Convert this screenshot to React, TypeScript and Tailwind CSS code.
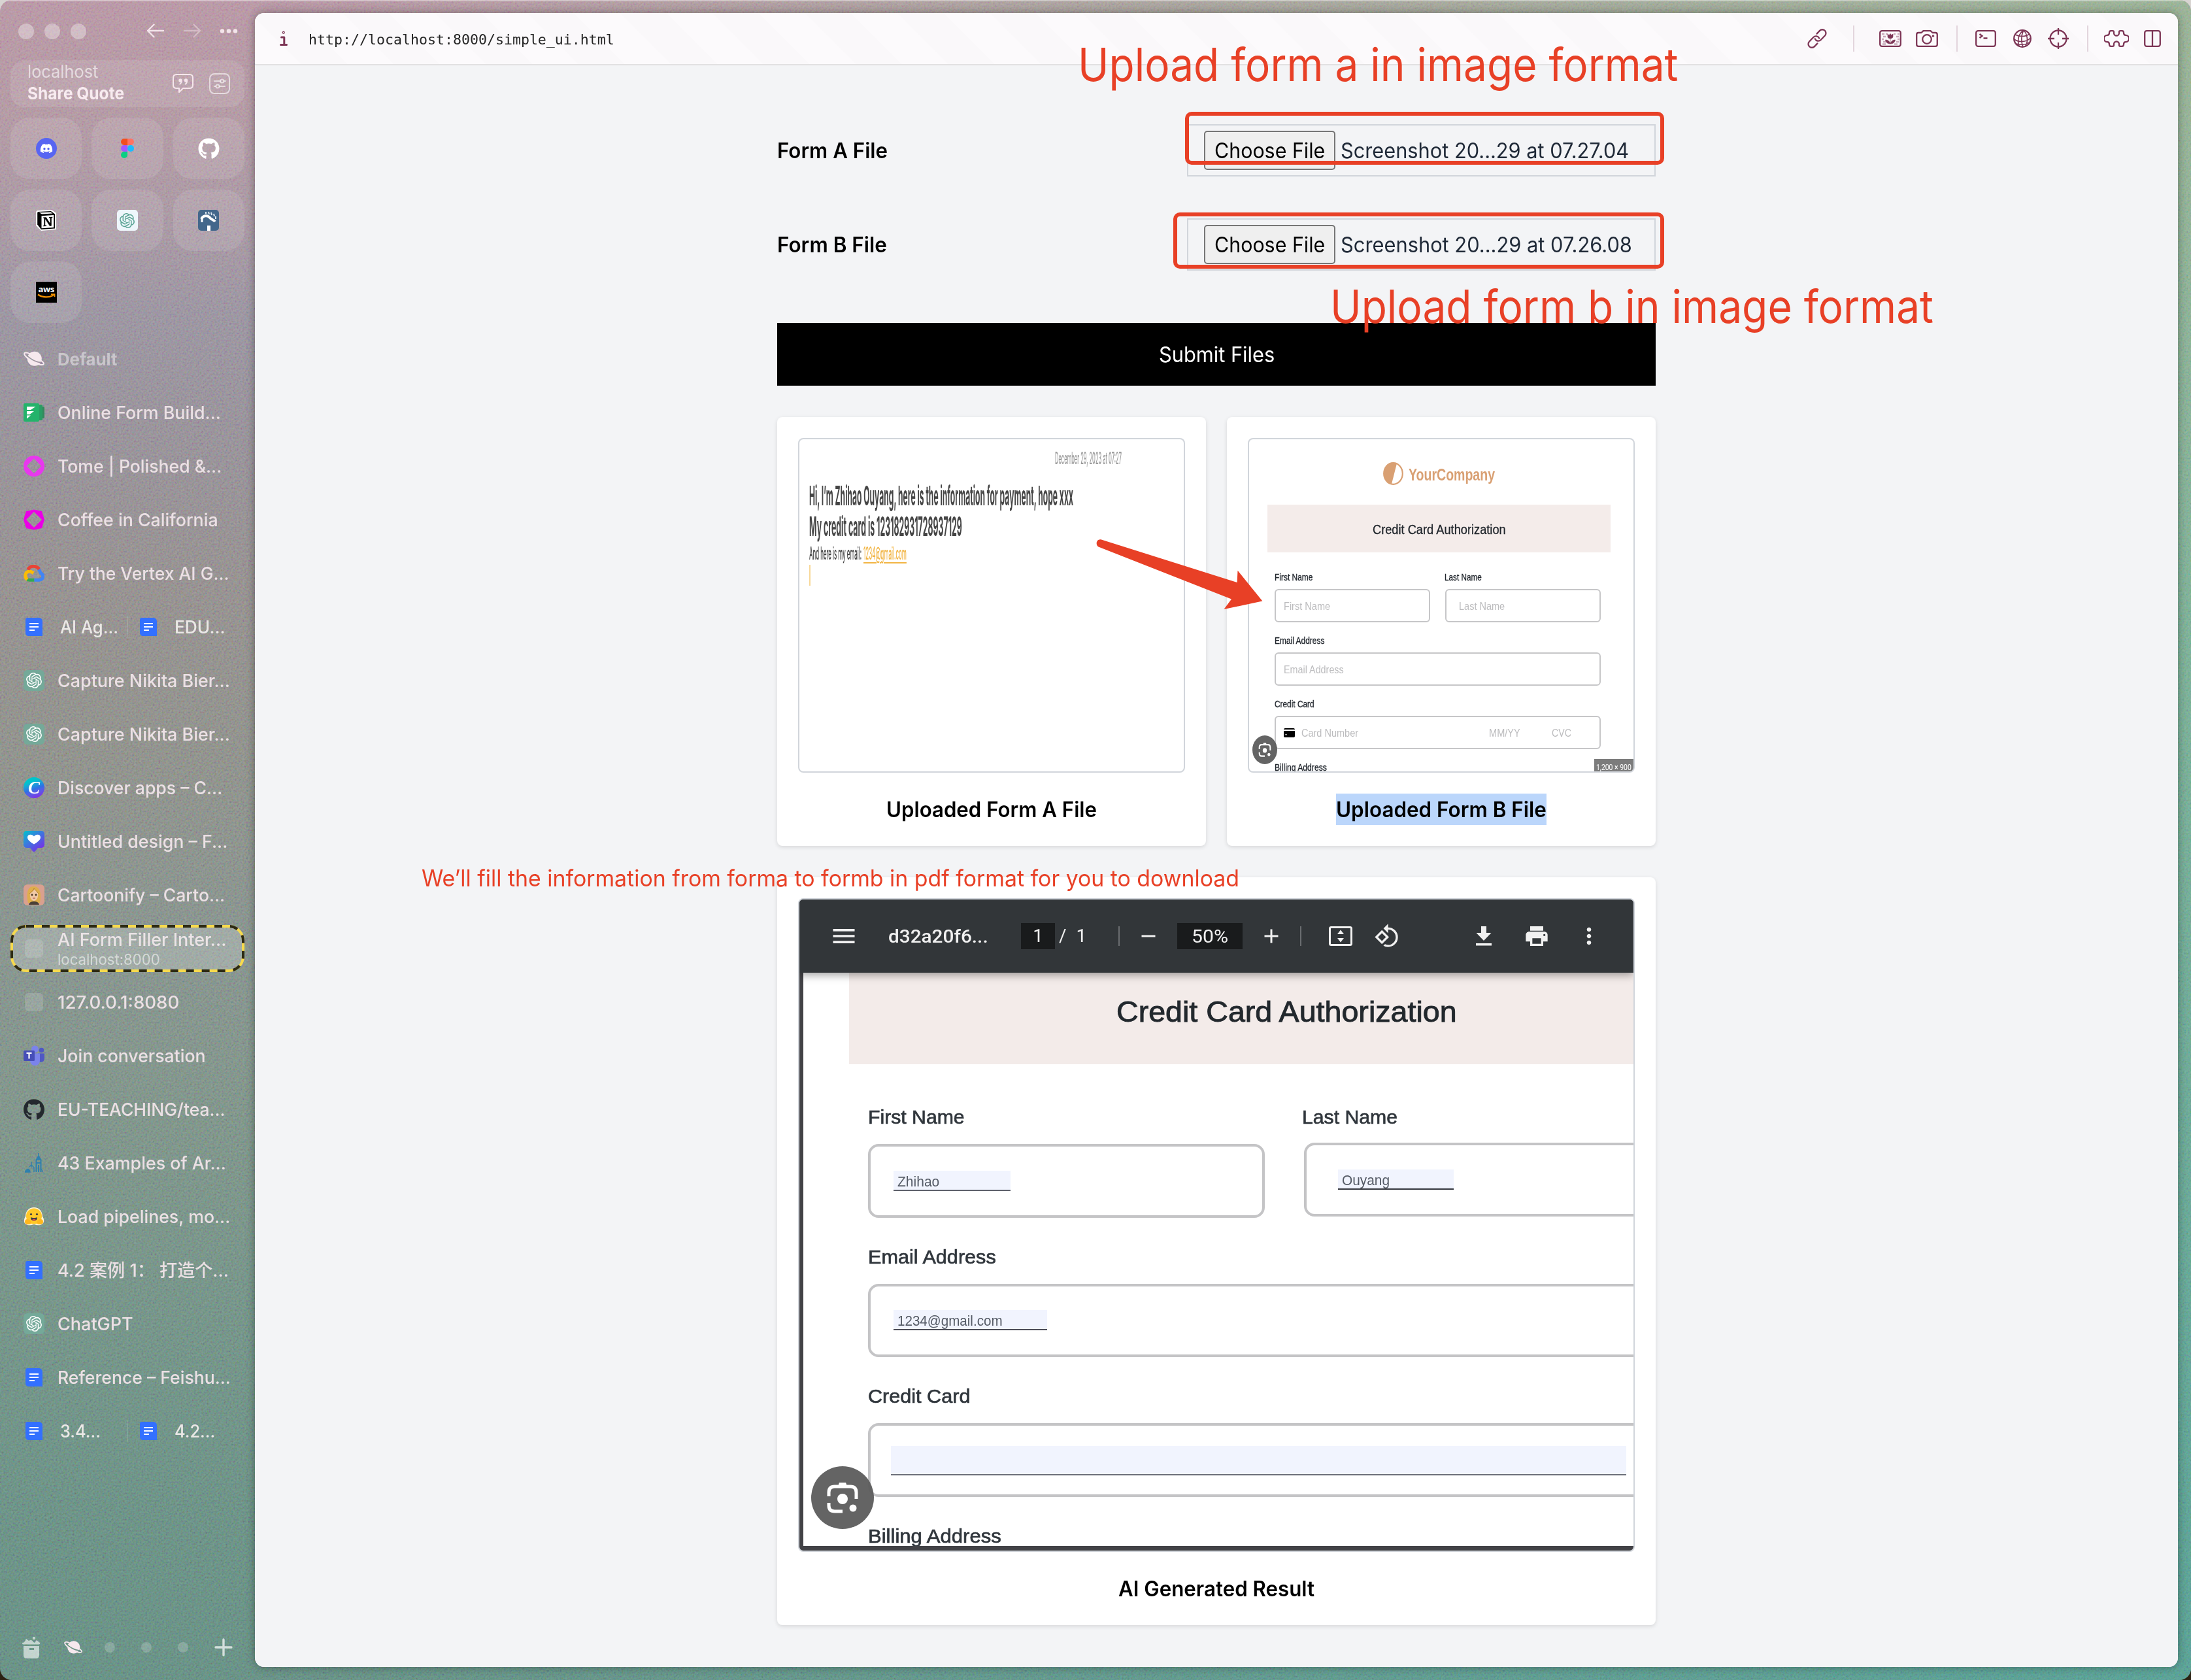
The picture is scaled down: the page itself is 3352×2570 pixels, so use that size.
import { useLayoutEffect, useRef } from "react";
import type { ReactNode } from "react";
import { FaDiscord, FaGithub } from "react-icons/fa";
import { SiOpenai } from "react-icons/si";
import { MdMenu, MdRemove, MdAdd, MdPrint, MdMoreVert, MdRotate90DegreesCcw } from "react-icons/md";

/* Single line of text stretched or squeezed to the width of its box. */
function Fit({ className, children }: { className: string; children: ReactNode }) {
  const box = useRef<HTMLSpanElement>(null);
  const line = useRef<HTMLSpanElement>(null);
  useLayoutEffect(() => {
    if (!box.current || !line.current) return;
    const natural = line.current.offsetWidth;
    if (natural > 0) {
      line.current.style.transform = `translateY(1px) scaleX(${box.current.clientWidth / natural})`;
    }
  });
  return (
    <span ref={box} className={`block shrink-0 whitespace-nowrap ${className}`}>
      <span ref={line} className="inline-block origin-left">
        {children}
      </span>
    </span>
  );
}

/* ---------- sidebar icons ---------- */

function Planet({ className, id }: { className: string; id: string }) {
  return (
    <svg viewBox="0 0 32 24" className={className} fill="none">
      <mask id={id}>
        <rect width="32" height="24" fill="white" />
        <path d="M3 5 C8 13 22 21 30 19" stroke="black" strokeWidth="1.8" transform="translate(-1 -2)" />
      </mask>
      <path
        d="M9 4 C5 2 1.5 2.2 1.2 4 C0.8 7 9 14 17 18 C24 21.3 30 22 30.8 19.8 C31.3 18 29.5 16.5 27 14.8"
        stroke="#f6e9ee"
        strokeWidth="2"
        strokeLinecap="round"
      />
      <ellipse cx="16.8" cy="11.8" rx="11" ry="11" fill="#f6e9ee" mask={`url(#${id})`} />
    </svg>
  );
}

function Figma() {
  return (
    <svg viewBox="0 0 20 30" className="h-[30px] w-5">
      <path d="M5 0H10V10H5A5 5 0 0 1 5 0Z" fill="#f24e1e" />
      <path d="M10 0H15A5 5 0 0 1 15 10H10Z" fill="#ff7262" />
      <path d="M5 10H10V20H5A5 5 0 0 1 5 10Z" fill="#a259ff" />
      <circle cx="15" cy="15" r="5" fill="#1abcfe" />
      <path d="M5 20H10V25A5 5 0 1 1 5 20Z" fill="#0acf83" />
    </svg>
  );
}

function Notion() {
  return (
    <svg viewBox="0 0 32 32" className="size-8">
      <path d="M2 1 L24 0 L31 5 V30 L8 32 L0 24 V3 Z" fill="white" />
      <path d="M3 3 L23 2 L29 6.5 V28.5 L8 30 L2.2 22.5 V4.5 Z" fill="black" />
      <path d="M5 4.2 L22.5 3.4 L25.5 5.5 L9 6.5 Z" fill="white" />
      <path d="M8.5 9.2 L27.2 8 V27 L8.5 28.2 Z" fill="white" />
      <path d="M11.2 11.6 L15.6 11.3 L21.7 20.8 V12.7 L20 12.3 V11.1 L25.3 10.8 V12 L23.8 12.5 V24.6 L21.2 24.9 L14.2 14.2 V23.4 L16.2 23.9 V25 L11.2 25.3 V24.1 L12.4 23.7 V13.1 L11.2 12.8 Z" fill="black" />
    </svg>
  );
}

function BlueTile() {
  return (
    <svg viewBox="0 0 32 32" className="size-8">
      <rect width="32" height="32" rx="5" fill="#43678b" />
      <path d="M5 14 C8 8 15 8 18 12 C20 15 24 15 26 18" stroke="white" strokeWidth="4" fill="none" />
      <path d="M6 19 V13" stroke="white" strokeWidth="3" />
      <path d="M16.5 24 V32" stroke="white" strokeWidth="5" />
      <path d="M12 3v3M16 3l1 4M20 4l1 4M24 6l1 4M27 10v4" stroke="#dbe6f0" strokeWidth="2" />
    </svg>
  );
}

function Aws() {
  return (
    <div className="flex size-8 flex-col items-center bg-black">
      <span className="mt-[5px] font-['Open_Sans'] text-[13px] leading-[13px] font-bold tracking-tight text-white">aws</span>
      <svg viewBox="0 0 28 8" className="h-2 w-7" fill="none">
        <path d="M1 1.5 C8 6.5 18 6.5 25 2.5" stroke="#f29100" strokeWidth="2.2" />
        <path d="M21 1.2 H26.5 V5" stroke="#f29100" strokeWidth="1.8" />
      </svg>
    </div>
  );
}

function FormIcon() {
  return (
    <svg viewBox="0 0 32 28" className="h-7 w-8">
      <rect x="20" y="5" width="12" height="18" rx="1.5" fill="#35895c" />
      <rect x="16" y="2" width="13" height="24" rx="1.5" fill="#2a9d64" />
      <rect width="24" height="28" rx="2" fill="#24b36b" />
      <path d="M5 5 H18.5 L11 10 H5Z M5 12 H16 L9.5 17 H5Z M5 18.5 L11 18.5 L5 23.5Z" fill="white" />
    </svg>
  );
}

function Tome({ octagon }: { octagon?: boolean }) {
  return octagon ? (
    <svg viewBox="0 0 32 32" className="size-8">
      <path fillRule="evenodd" d="M16 0.5 L28 3 L32 16 L28 29 L16 31.5 L4 29 L0 16 L4 3 Z M16 4 L4 16 L16 28 L28 16 Z" fill="#ea00e6" />
    </svg>
  ) : (
    <svg viewBox="0 0 32 32" className="size-8">
      <path fillRule="evenodd" d="M16 0 C25 0 32 7 32 16 C32 25 25 32 16 32 C7 32 0 25 0 16 C0 7 7 0 16 0 Z M16 4.5 L5 16 L16 27.5 L27 16 Z" fill="#e838ee" />
    </svg>
  );
}

function GoogleCloud() {
  return (
    <svg viewBox="0 0 32 26" className="h-[26px] w-8" fill="none" strokeWidth="5">
      <path d="M7 23 C1 20.5 1.5 11 8.5 10 C12 9.7 14 12 15.2 12.8" stroke="#fbbc05" />
      <path d="M6 22.4 C7 23.3 8.5 23.2 9.5 23.2 H16.5" stroke="#34a853" />
      <path d="M16.5 23.2 H24 C31.5 22.5 31 14.5 26 12.5 C25.3 10 24 7.5 22.5 6.5" stroke="#4285f4" />
      <path d="M6.8 7.6 C9.5 1 19 0.4 24 6.6" stroke="#ea4335" />
    </svg>
  );
}

function Doc() {
  return (
    <svg viewBox="0 0 26 28" className="h-7 w-[26px] shrink-0">
      <path d="M3 0 H20 C24 0 26 2.5 26 6 V28 H5 C2 28 0 26 0 23 V3 C0 1 1 0 3 0Z" fill="#3370ff" />
      <path d="M6 9 H20 M6 14 H20 M6 19 H14" stroke="white" strokeWidth="2" />
    </svg>
  );
}

function GptTile({ light }: { light?: boolean }) {
  return light ? (
    <div className="flex size-8 items-center justify-center rounded-[5px] bg-[#eef6fb]">
      <SiOpenai className="size-[23px] text-[#5aa394]" />
    </div>
  ) : (
    <div className="flex size-8 items-center justify-center rounded-md bg-[#74a999]">
      <SiOpenai className="size-6 text-white" />
    </div>
  );
}

function Canva() {
  return (
    <div className="flex size-8 items-center justify-center rounded-full bg-linear-160 from-[#00c4cc] from-25% via-[#2f6fe4] via-55% to-[#7d2ae8] to-90%">
      <span className="font-['Liberation_Serif'] text-[27px] leading-8 font-bold text-white italic">C</span>
    </div>
  );
}

function HeartTile() {
  return (
    <svg viewBox="0 0 32 32" className="size-8">
      <defs>
        <linearGradient id="heart-bg" x1="0" y1="0" x2="0.8" y2="1">
          <stop offset="0" stopColor="#00c4cc" />
          <stop offset="0.5" stopColor="#3f73e0" />
          <stop offset="1" stopColor="#7d2ae8" />
        </linearGradient>
      </defs>
      <path d="M5 0 H27 C30 0 32 2 32 5 V21 C32 24 30 26 27 26 H22 L18 31 C17 32.3 15 32.3 14 31 L10 26 H5 C2 26 0 24 0 21 V5 C0 2 2 0 5 0Z" fill="url(#heart-bg)" />
      <path d="M16 20.5 C10 17 6 13.5 6 10 C6 5 13 4.5 16 8.5 C19 4.5 26 5 26 10 C26 13.5 22 17 16 20.5Z" fill="white" />
    </svg>
  );
}

function GirlTile() {
  return (
    <svg viewBox="0 0 32 32" className="size-8">
      <rect width="32" height="32" rx="6" fill="#d9a08f" />
      <path d="M7 28 C4 14 6 3 15 3 C25 2 28 14 25 28 Z" fill="#dfae4c" />
      <path d="M8 31 C9 27 12 26 16 26 C20 26 23 27 24 31 Z" fill="#4a4038" />
      <path d="M10 13 C13 12 16 9 17 7 C19 10 21 11 22 13 C23 20 20 25 16 25 C12 25 9 20 10 13Z" fill="#f0c9a6" />
      <path d="M9 14 C12 12 15 9 16 6 C18 9 21 11 23 14" stroke="#b98430" strokeWidth="1" fill="none" />
      <circle cx="13" cy="16" r="1.4" fill="#43301f" />
      <circle cx="19" cy="16" r="1.4" fill="#43301f" />
      <path d="M14 21 H18" stroke="#b5655a" strokeWidth="1.4" />
    </svg>
  );
}

function Blank() {
  return <div className="size-7 rounded-md bg-white/15" />;
}

function Teams() {
  return (
    <svg viewBox="0 0 32 32" className="size-8">
      <circle cx="27.5" cy="7.5" r="3.8" fill="#4f58c4" />
      <path d="M22 12.5 H32 V20 C32 27 23 27 22 24Z" fill="#4f58c4" />
      <circle cx="17.5" cy="6" r="5.5" fill="#7b83eb" />
      <path d="M10 12.5 H25 V23 C25 34 10 34 10 23Z" fill="#7b83eb" />
      <rect y="8" width="17" height="16" rx="1.5" fill="#464eb8" />
      <path d="M4.5 12 H12.5 M8.5 12 V20.5" stroke="white" strokeWidth="2.2" />
    </svg>
  );
}

function Castle() {
  return (
    <svg viewBox="0 0 28 30" className="h-[30px] w-7" fill="none" stroke="#2f80ad">
      <path d="M21 0 V4 M17.5 10 L21 4 L24.5 10 Z" strokeWidth="1.5" fill="#2f80ad" />
      <path d="M17.5 10 V29 M24.5 10 V29 M17 15 H25 M21 18 V29" strokeWidth="2" />
      <path d="M10 13 V22 M7 21 L10 18 L14 22 V29" strokeWidth="1.4" />
      <path d="M0 29 C3 23 7 23 8 29 Z M25 24 L28 29" strokeWidth="1.4" fill="#2f80ad" />
    </svg>
  );
}

function HuggingFace() {
  return (
    <svg viewBox="0 0 32 28" className="h-7 w-8">
      <path d="M16 0 C24 0 29 6 29 14 C32 18 32 24 28 26 C24 28 21 27.5 16 26 C11 27.5 8 28 4 26 C0 24 0 18 3 14 C3 6 8 0 16 0Z" fill="#fff3d6" />
      <circle cx="16" cy="13.5" r="12" fill="#ffc928" />
      <path d="M2 22 C2 17 8 17 11 21 C13 24 11 26 7 26 C4 26 2 25 2 22Z M30 22 C30 17 24 17 21 21 C19 24 21 26 25 26 C28 26 30 25 30 22Z" fill="#ffb71c" />
      <path d="M11 15 C13 16.500 19 16.500 21 15 C21 19 19 20.500 16 20.500 C13 20.500 11 19 11 15Z" fill="#3a3b45" />
      <path d="M13 19 C14.500 17.500 17.500 17.500 19 19 C17.500 20.800 14.500 20.800 13 19Z" fill="#f0524b" />
      <circle cx="11.5" cy="10.5" r="1.6" fill="#3a3b45" />
      <circle cx="20.5" cy="10.5" r="1.6" fill="#3a3b45" />
    </svg>
  );
}

function Row({ icon, width, children }: { icon: ReactNode; width: string; children: ReactNode }) {
  return (
    <div className="flex h-[82px] items-center pl-9">
      <div className="mr-5 flex w-8 shrink-0 justify-center">{icon}</div>
      <Fit className={`text-[27px] leading-9 font-medium text-[#ebe0e4] ${width}`}>{children}</Fit>
    </div>
  );
}

function SplitRow({ left, leftWidth, right, rightWidth }: { left: string; leftWidth: string; right: string; rightWidth: string }) {
  return (
    <div className="flex h-[82px] items-center pl-[39px]">
      <div className="flex w-[156px] items-center gap-[27px]">
        <Doc />
        <Fit className={`text-[27px] leading-9 font-medium text-[#ebe8e6] ${leftWidth}`}>{left}</Fit>
      </div>
      <div className="h-8 w-px bg-white/20" />
      <div className="flex items-center gap-[27px] pl-[18px]">
        <Doc />
        <Fit className={`text-[27px] leading-9 font-medium text-[#ebe8e6] ${rightWidth}`}>{right}</Fit>
      </div>
    </div>
  );
}

function Tile({ children }: { children: ReactNode }) {
  return <div className="flex h-[94px] items-center justify-center rounded-[30px] bg-white/10">{children}</div>;
}

function Sidebar() {
  return (
    <aside className="flex w-[390px] shrink-0 flex-col">
      <div className="mt-[26px] flex h-11 items-center pl-7">
        <div className="flex gap-4">
          <div className="size-6 rounded-full bg-white/35" />
          <div className="size-6 rounded-full bg-white/35" />
          <div className="size-6 rounded-full bg-white/35" />
        </div>
        <svg viewBox="0 0 140 24" className="ml-[92px] h-6 w-[140px]" fill="none" stroke="#f3e4ea" strokeWidth="2.4" strokeLinecap="round" strokeLinejoin="round">
          <path d="M26 11 H2 M11.500 1.500 L2 11 L11.500 20.500" />
          <path d="M58 11 H82 M72.500 1.500 L82 11 L72.500 20.500" opacity="0.45" />
          <g fill="#f3e4ea" stroke="none">
            <circle cx="116" cy="11.500" r="3.200" />
            <circle cx="126" cy="11.500" r="3.200" />
            <circle cx="136" cy="11.500" r="3.200" />
          </g>
        </svg>
      </div>

      <div className="mx-4 mt-[22px] flex h-[72px] items-center rounded-[22px] bg-white/10 pr-[22px] pl-[26px]">
        <div className="pb-[6px]">
          <Fit className="w-[108px] text-[27px] leading-[33px] text-white/60">localhost</Fit>
          <Fit className="w-[148px] text-[26px] leading-[33px] font-bold text-[#f8ebf0]">Share Quote</Fit>
        </div>
        <svg viewBox="0 0 88 32" className="ml-auto h-8 w-[88px]" fill="none">
          <path d="M6 2 H26 C29 2 31 4 31 7 V18 C31 21 29 23 26 23 H16 L10 29 V23 H6 C3 23 1 21 1 18 V7 C1 4 3 2 6 2Z" stroke="#f6e6ec" strokeWidth="2" strokeLinejoin="round" />
          <g fill="#f6e6ec">
            <circle cx="12" cy="11" r="2.700" />
            <circle cx="20.500" cy="11" r="2.700" />
          </g>
          <path d="M13.800 11 C14 14 12.500 16 10.500 17 M22.300 11 C22.500 14 21 16 19 17" stroke="#f6e6ec" strokeWidth="1.800" />
          <g stroke="white" strokeOpacity="0.6" strokeWidth="2">
            <rect x="57" y="1" width="30" height="30" rx="7" />
            <path d="M64 12 H73 M79 12 H81 M64 20 H66 M72 20 H80" strokeLinecap="round" />
            <circle cx="75.800" cy="12" r="2.600" />
            <circle cx="69" cy="20" r="2.600" />
          </g>
        </svg>
      </div>

      <div className="mx-4 mt-4 grid grid-cols-3 gap-x-[15px] gap-y-4">
        <Tile>
          <div className="flex size-8 items-center justify-center rounded-full bg-[#5865f2]">
            <FaDiscord className="size-5 text-white" />
          </div>
        </Tile>
        <Tile><Figma /></Tile>
        <Tile><FaGithub className="size-[33px] text-white" /></Tile>
        <Tile><Notion /></Tile>
        <Tile><GptTile light /></Tile>
        <Tile><BlueTile /></Tile>
        <Tile><Aws /></Tile>
      </div>

      <div className="mt-3.5 flex h-[82px] items-center pl-9">
        <Planet className="mr-5 h-6 w-8" id="planet-space" />
        <Fit className="w-[91px] text-[26px] leading-9 font-bold text-white/45">Default</Fit>
      </div>

      <Row icon={<FormIcon />} width="w-[250px]">Online Form Build...</Row>
      <Row icon={<Tome />} width="w-[251px]">Tome | Polished &amp;...</Row>
      <Row icon={<Tome octagon />} width="w-[246px]">Coffee in California</Row>
      <Row icon={<GoogleCloud />} width="w-[263px]">Try the Vertex AI G...</Row>
      <SplitRow left="AI Ag..." leftWidth="w-[89px]" right="EDU..." rightWidth="w-[77px]" />
      <Row icon={<GptTile />} width="w-[264px]">Capture Nikita Bier...</Row>
      <Row icon={<GptTile />} width="w-[264px]">Capture Nikita Bier...</Row>
      <Row icon={<Canva />} width="w-[252px]">Discover apps – C...</Row>
      <Row icon={<HeartTile />} width="w-[260px]">Untitled design – F...</Row>
      <Row icon={<GirlTile />} width="w-[256px]">Cartoonify – Carto...</Row>

      <div className="flex h-[82px] items-center px-4">
        <div className="relative flex h-[72px] w-[358px] items-center rounded-[24px] bg-white/20 pl-5">
          <svg viewBox="0 0 358 72" className="absolute inset-0 h-[72px] w-[358px]" fill="none">
            <rect x="2" y="2" width="354" height="68" rx="22" stroke="#f7da4d" strokeWidth="4" />
            <rect x="2" y="2" width="354" height="68" rx="22" stroke="#2d2a14" strokeWidth="4" strokeDasharray="12 12" />
          </svg>
          <div className="mr-5 flex w-8 justify-center"><Blank /></div>
          <div>
            <Fit className="w-[258px] text-[27px] leading-[32px] font-medium text-[#ebe4e6]">AI Form Filler Inter...</Fit>
            <Fit className="w-[157px] text-[23px] leading-[28px] text-white/55">localhost:8000</Fit>
          </div>
        </div>
      </div>

      <Row icon={<Blank />} width="w-[186px]">127.0.0.1:8080</Row>
      <Row icon={<Teams />} width="w-[227px]">Join conversation</Row>
      <Row icon={<FaGithub className="size-[33px] text-[#24292e]" />} width="w-[257px]">EU-TEACHING/tea...</Row>
      <Row icon={<Castle />} width="w-[258px]">43 Examples of Ar...</Row>
      <Row icon={<HuggingFace />} width="w-[264px]">Load pipelines, mo...</Row>
      <Row icon={<Doc />} width="w-[262px]">4.2 案例 1： 打造个...</Row>
      <Row icon={<GptTile />} width="w-[116px]">ChatGPT</Row>
      <Row icon={<Doc />} width="w-[265px]">Reference – Feishu...</Row>
      <SplitRow left="3.4..." leftWidth="w-[62px]" right="4.2..." rightWidth="w-[62px]" />

      <div className="mt-auto flex h-[100px] items-center pr-[34px] pl-[34px]">
        <svg viewBox="0 0 28 34" className="h-[34px] w-7" fill="#fff" fillOpacity="0.6">
          <path d="M0 10 C3 10 4 8 6 4 L10 7 C13 5 16 6 17 9 L19 10 L22 6 L27 10 C28 12 26 12.500 25 12.500 H2 C0 12.500 0 11 0 10Z" />
          <circle cx="18" cy="3" r="2.200" />
          <path fillRule="evenodd" d="M2 15 H26 V29 C26 32 24 34 21 34 H7 C4 34 2 32 2 29Z M11 18 V21 H18 V18Z" />
        </svg>
        <Planet className="ml-9 h-[22px] w-7" id="planet-bar" />
        <div className="ml-[34px] size-4 rounded-full bg-white/20" />
        <div className="ml-10 size-4 rounded-full bg-white/20" />
        <div className="ml-10 size-4 rounded-full bg-white/20" />
        <svg viewBox="0 0 28 28" className="ml-auto size-7" stroke="#fff" strokeOpacity="0.7" strokeWidth="3.4" strokeLinecap="round">
          <path d="M2 14 H26 M14 2 V26" />
        </svg>
      </div>
    </aside>
  );
}

/* ---------- address bar ---------- */

const barIcon = "shrink-0 fill-none stroke-[#7d3656] stroke-[2.3]";

function AddressBar() {
  return (
    <header className="flex h-20 shrink-0 items-center border-b-2 border-[#e2e1e2] bg-[repeating-linear-gradient(45deg,#fcfafc_0px,#fcfafc_50px,#faf8fa_50px,#faf8fa_100px)] pr-[26px] pl-[38px]">
      <svg viewBox="0 0 12 24" className="h-6 w-3" fill="none" stroke="#7d3656" strokeWidth="3" strokeLinecap="round" strokeLinejoin="round">
        <path d="M2.500 10 H6.800 V21 M1.500 21.500 H10.500" />
        <circle cx="5.800" cy="2.800" r="0.600" />
      </svg>
      <Fit className="ml-8 w-[468px] pt-0.5 font-['DejaVu_Sans_Mono'] text-[22px] leading-8 text-[#262626]">http://localhost:8000/simple_ui.html</Fit>

      <div className="ml-auto flex items-center">
        <svg viewBox="0 0 36 36" className={`${barIcon} size-9`}>
          <g transform="rotate(-46 18 18)" strokeLinecap="round">
            <path d="M13 23.500 H6.500 A5.500 5.500 0 0 1 6.500 12.500 H15.500 A5.500 5.500 0 0 1 20.500 20" />
            <path d="M23 12.500 H29.500 A5.500 5.500 0 0 1 29.500 23.500 H20.500 A5.500 5.500 0 0 1 15.500 16" />
          </g>
        </svg>
        <div className="ml-[37px] h-10 w-0.5 bg-[#e3d5dd]" />
        <svg viewBox="0 0 34 26" className={`${barIcon} ml-[38px] h-[26px] w-[34px]`}>
          <rect x="1.200" y="1.200" width="31.600" height="23.600" rx="3" />
          <path d="M4 6h4M10 6h3M22 6h3M28 6h3M6 10h4M26 10h4M4 14h3M28 14h3M6 18h4M26 18h4M5 21.500h5M23 21.500h5" className="stroke-[#c9a9b9]" />
          <path d="M13 6 L15 8 L17 5.500 L19 8 L21 6 V10 C21 14 13 14 13 10Z M17 13 V21 M17 21 C12 21 10 18 9.500 15 C13 15 16 17 17 21 C18 17 21 15 24.500 15 C24 18 22 21 17 21Z" className="fill-[#7d3656]" strokeWidth="0.600" />
        </svg>
        <svg viewBox="0 0 34 26" className={`${barIcon} ml-[22px] h-[26px] w-[34px]`}>
          <path d="M4 4 H8.500 L11.500 1.200 H22.500 L25.500 4 H30 C32 4 32.800 5 32.800 7 V22 C32.800 24 32 24.800 30 24.800 H4 C2 24.800 1.200 24 1.200 22 V7 C1.200 5 2 4 4 4Z" strokeLinejoin="round" />
          <circle cx="17" cy="14" r="6.800" />
          <circle cx="26.500" cy="9" r="0.700" />
        </svg>
        <div className="ml-[28px] h-10 w-0.5 bg-[#e3d5dd]" />
        <svg viewBox="0 0 32 26" className={`${barIcon} ml-[27px] h-[26px] w-8`}>
          <rect x="1.200" y="1.200" width="29.600" height="23.600" rx="3" />
          <path d="M6.500 6 L10.500 9 L6.500 12 M12.500 12.500 H18.500" />
        </svg>
        <svg viewBox="0 0 28 28" className={`${barIcon} ml-[26px] size-7`}>
          <circle cx="14" cy="14" r="12.800" />
          <path d="M16 1.500 C8 6 6 17 9 25 M16 1.500 C12 8 12 20 15 26.500 M16 1.500 C22 7 23 18 19 25 M3 8 C9 11 18 12 25 7 M1.500 15 C8 20 20 20 26.500 13 M5 22 C10 24 19 24 24 20" strokeWidth="1.500" className="stroke-[1.6]" />
        </svg>
        <svg viewBox="0 0 34 34" className={`${barIcon} ml-[24px] size-[34px]`}>
          <circle cx="17" cy="17" r="12.500" />
          <path d="M17 1 V11 M17 23 V33 M1 17 H11 M23 17 H33" />
        </svg>
        <div className="ml-[27px] h-10 w-0.5 bg-[#e3d5dd]" />
        <svg viewBox="0 0 38 26" className={`${barIcon} ml-[24px] h-[26px] w-[38px]`} strokeLinejoin="round">
          <path d="M10.500 1.200 H13 C14.500 1.200 15 2 15 3 V4.500 A4 4 0 0 0 23 4.500 V3 C23 2 23.500 1.200 25 1.200 H27.500 C29 1.200 30 2.500 30 4 C30 6.500 31 7.800 33 7.800 A5.200 5.200 0 0 1 33 18.200 C31 18.200 30 19.500 30 22 C30 23.500 29 24.800 27.500 24.800 H25 C23.500 24.800 23 24 23 23 V21.500 A4 4 0 0 0 15 21.500 V23 C15 24 14.500 24.800 13 24.800 H10.500 C9 24.800 8 23.500 8 22 C8 19.500 7 18.200 5 18.200 A5.200 5.200 0 0 1 5 7.800 C7 7.800 8 6.500 8 4 C8 2.500 9 1.200 10.500 1.200 Z" />
        </svg>
        <svg viewBox="0 0 26 26" className={`${barIcon} ml-[23px] size-[26px]`}>
          <rect x="1.200" y="1.200" width="23.600" height="23.600" rx="3" />
          <path d="M13 1 V25" />
        </svg>
      </div>
    </header>
  );
}

/* ---------- page content ---------- */

function FileRow({ label, labelWidth, name, nameWidth }: { label: string; labelWidth: string; name: string; nameWidth: string }) {
  return (
    <div className="flex h-20 items-center justify-between">
      <Fit className={`text-[32px] leading-[48px] font-semibold text-black ${labelWidth}`}>{label}</Fit>
      <div className="flex h-20 w-[717px] items-center border-2 border-[#d1d5db] pl-6">
        <div className="flex h-[60px] w-[201px] items-center justify-center rounded-[5px] border-2 border-[#767676] bg-[#efefef]">
          <Fit className="w-[169px] text-[32px] leading-[48px] text-black">Choose File</Fit>
        </div>
        <Fit className={`ml-2 text-[32px] leading-[48px] text-[#1f2937] ${nameWidth}`}>{name}</Fit>
      </div>
    </div>
  );
}

function Lens({ className }: { className: string }) {
  return (
    <svg viewBox="0 0 96 96" preserveAspectRatio="none" className={className} fill="none">
      <circle cx="48" cy="48" r="48" fill="#5c5c5c" fillOpacity="0.95" />
      <g stroke="white" strokeWidth="5">
        <path d="M27 46 V40 C27 34 30 31 36 31 H60 C66 31 69 34 69 40 V50" />
        <path d="M27 56 V60 C27 66 30 69 36 69 H48" />
      </g>
      <path d="M41 31 L43 25 H53 L55 31Z" fill="white" />
      <circle cx="48" cy="50" r="8" fill="white" />
      <circle cx="64" cy="64" r="5.500" fill="white" />
    </svg>
  );
}

function LetterPreview() {
  return (
    <div className="h-[512px] overflow-hidden rounded-lg border-2 border-[#d1d5db] bg-white pt-2 pl-[15px] text-[#454545]">
      <Fit className="ml-[376px] w-[102px] text-[25px] leading-10 font-medium text-[#9c9c9c]">December 29, 2023 at 07:27</Fit>
      <Fit className="mt-[14px] w-[404px] text-[41px] leading-[47px] font-bold">Hi, I’m Zhihao Ouyang, here is the information for payment, hope xxx</Fit>
      <Fit className="w-[234px] text-[41px] leading-[47px] font-bold">My credit card is 123182931728937129</Fit>
      <div className="flex">
        <Fit className="w-[80px] text-[27px] leading-9 font-medium">And here is my email:</Fit>
        <Fit className="ml-[3px] w-[66px] text-[27px] leading-9 font-medium text-[#f2b544]">
          <u className="decoration-2 underline-offset-4">1234@gmail.com</u>
        </Fit>
      </div>
      <div className="h-8 w-0.5 bg-[#f8d898]" />
    </div>
  );
}

const thumbLabel = "text-[14px] leading-5 text-[#22272e] [-webkit-text-stroke:0.3px_#22272e]";
const thumbBox = "mt-[9px] flex h-[51px] items-center rounded-md border-2 border-[#c6c6c8] pl-3";
const thumbHint = "text-[17px] leading-5 text-[#bcbcbe]";

function FormPreview() {
  return (
    <div className="relative h-[512px] overflow-hidden rounded-lg border-2 border-[#d1d5db] bg-white font-['Liberation_Sans']">
      <div className="ml-7 w-[525px] pt-[35px]">
        <div className="flex h-[35px] items-center justify-center gap-2">
          <svg viewBox="0 0 31 35" className="h-[35px] w-[31px]">
            <ellipse cx="15.500" cy="17.500" rx="14.300" ry="16.300" fill="white" stroke="#d9a073" strokeWidth="2.200" />
            <path d="M21 2 C8 -3 0 8 1 18 C2 28 7 34 13 33.500 Z" fill="#d9a073" />
          </svg>
          <Fit className="w-[132px] text-[25px] leading-8 font-bold text-[#d9a073]">YourCompany</Fit>
        </div>
        <div className="mt-[30px] flex h-[73px] items-center justify-center bg-[#f4ecea]">
          <Fit className="w-[204px] text-[21px] leading-8 text-[#20262c] [-webkit-text-stroke:0.3px_#20262c]">Credit Card Authorization</Fit>
        </div>
      </div>
      <div className="mt-[27px] ml-[39px] w-[499px]">
        <div className="grid grid-cols-2 gap-[23px]">
          <div>
            <Fit className={`${thumbLabel} w-[58px]`}>First Name</Fit>
            <div className={thumbBox}><Fit className={`${thumbHint} w-[71px]`}>First Name</Fit></div>
          </div>
          <div>
            <Fit className={`${thumbLabel} -ml-px w-[57px]`}>Last Name</Fit>
            <div className={thumbBox}><Fit className={`${thumbHint} ml-[7px] w-[70px]`}>Last Name</Fit></div>
          </div>
        </div>
        <Fit className={`${thumbLabel} mt-[17px] w-[76px]`}>Email Address</Fit>
        <div className={thumbBox}><Fit className={`${thumbHint} w-[92px]`}>Email Address</Fit></div>
        <Fit className={`${thumbLabel} mt-[17px] w-[61px]`}>Credit Card</Fit>
        <div className={thumbBox}>
          <svg viewBox="0 0 17 14" className="h-3.5 w-[17px]">
            <path d="M2 0 H15 C16.500 0 17 1 17 2 H0 C0 1 0.500 0 2 0Z M0 4 H17 V12 C17 13.500 16 14 15 14 H2 C1 14 0 13.500 0 12Z" />
            <rect x="2.500" y="9" width="2" height="1.500" fill="white" />
          </svg>
          <Fit className={`${thumbHint} ml-[10px] w-[87px]`}>Card Number</Fit>
          <Fit className={`${thumbHint} ml-[200px] w-[48px]`}>MM/YY</Fit>
          <Fit className={`${thumbHint} ml-12 w-[30px]`}>CVC</Fit>
        </div>
        <Fit className={`${thumbLabel} mt-[17px] w-[80px]`}>Billing Address</Fit>
      </div>
      <Lens className="absolute top-[453px] left-[5px] h-[44px] w-[38px]" />
      <div className="absolute right-0 bottom-0 flex h-[19px] w-[60px] items-center justify-center bg-[#7c7c7c]">
        <Fit className="w-[54px] pt-[3px] font-['Roboto'] text-[13.5px] leading-4 text-white">1,200 × 900</Fit>
      </div>
    </div>
  );
}

function PdfToolbar() {
  return (
    <div className="relative flex h-[112px] items-center bg-[#323639] pr-[48px] pl-[46px] font-['Roboto'] text-[#f1f1f1] shadow-[0_4px_12px_rgba(0,0,0,0.35)]">
      <MdMenu className="size-11" />
      <Fit className="ml-[46px] w-[153px] text-[28px] leading-10 font-medium">d32a20f6...</Fit>
      <div className="ml-[50px] flex h-10 w-[52px] items-center justify-center bg-[#191b1c] text-[28px] leading-10">1</div>
      <div className="ml-[6px] text-[28px] leading-10">/</div>
      <div className="ml-[15px] text-[28px] leading-10">1</div>
      <div className="ml-auto flex items-center">
        <div className="h-[30px] w-0.5 bg-[#6a6d70]" />
        <MdRemove className="ml-[26px] size-9" />
        <div className="ml-[26px] flex h-10 w-[100px] items-center justify-center bg-[#191b1c]">
          <Fit className="w-[56px] text-[28px] leading-10">50%</Fit>
        </div>
        <MdAdd className="ml-[26px] size-9" />
        <div className="ml-[26px] h-[30px] w-0.5 bg-[#6a6d70]" />
        <svg viewBox="0 0 36 30" className="ml-[42px] h-[30px] w-9">
          <rect x="1.500" y="1.500" width="33" height="27" rx="2" fill="none" stroke="#f1f1f1" strokeWidth="3" />
          <path d="M18 5.500 L23 12 H13Z M18 24.500 L13 18 H23Z" fill="#f1f1f1" />
        </svg>
        <MdRotate90DegreesCcw className="ml-[33px] size-10" />
        <svg viewBox="0 0 24 30" className="ml-[116px] h-[30px] w-6" fill="#f1f1f1">
          <path d="M8 0 H16 V10 H23.500 L12 22 L0.500 10 H8Z M0 26 H24 V29.500 H0Z" />
        </svg>
        <MdPrint className="ml-[49px] size-10" />
        <MdMoreVert className="ml-10 size-10" />
      </div>
    </div>
  );
}

const pdfLabel = "text-[30px] leading-10 text-[#30363c] [-webkit-text-stroke:0.7px_#30363c]";
const pdfBox = "mt-[22px] h-[112.5px] rounded-[16px] border-4 border-[#c4c4c6]";
const pdfField = "flex h-[31px] items-end border-b-2 bg-[#f1f4fe] pl-[6px] text-[22px] leading-[26px] text-[#555b66]";

function PdfViewer() {
  return (
    <div className="relative h-[1000px] overflow-hidden rounded-lg border-2 border-[#d1d5db] bg-[#424246] font-['Liberation_Sans']">
      <PdfToolbar />
      <div className="ml-1.5 h-[877px] overflow-hidden bg-white">
        <div className="ml-[70px] h-[140px] bg-[#f3ebe9] pt-[37px] pl-[409px]">
          <Fit className="w-[521px] text-[44px] leading-[44px] text-[#22282d] [-webkit-text-stroke:0.9px_#22282d]">Credit Card Authorization</Fit>
        </div>
        <div className="mt-[60px] ml-[99px] w-[1320px]">
          <div className="flex">
            <div className="w-[607px]">
              <Fit className={`${pdfLabel} w-[148px]`}>First Name</Fit>
              <div className={`${pdfBox} pt-[37px] pl-[35px]`}>
                <div className={`${pdfField} w-[179px] border-[#5e616b]`}><Fit className="w-[64px]">Zhihao</Fit></div>
              </div>
            </div>
            <div className="ml-[60px] w-[640px]">
              <Fit className={`${pdfLabel} -ml-[3px] w-[146px]`}>Last Name</Fit>
              <div className={`${pdfBox} relative -top-[2px] pt-[37px] pl-[48px]`}>
                <div className={`${pdfField} w-[177px] border-[#33353c]`}><Fit className="w-[73px]">Ouyang</Fit></div>
              </div>
            </div>
          </div>
          <Fit className={`${pdfLabel} mt-[39px] w-[196px]`}>Email Address</Fit>
          <div className={`${pdfBox} pt-[36px] pl-[35px]`}>
            <div className={`${pdfField} w-[235px] border-[#4b4d58]`}><Fit className="w-[161px]">1234@gmail.com</Fit></div>
          </div>
          <Fit className={`${pdfLabel} mt-[39px] w-[156px]`}>Credit Card</Fit>
          <div className={`${pdfBox} pt-[31px] pl-[31px]`}>
            <div className="h-[45px] w-[1125px] border-b-2 border-[#6d707b] bg-[#f1f4fe]" />
          </div>
          <Fit className={`${pdfLabel} mt-[39px] w-[204px]`}>Billing Address</Fit>
        </div>
      </div>
      <Lens className="absolute top-[867px] left-[18px] size-24" />
    </div>
  );
}

function Caption({ selected, width, children }: { selected?: boolean; width: string; children: ReactNode }) {
  return (
    <div className="mt-8 flex justify-center">
      <Fit className={`text-[32px] leading-[48px] font-semibold text-black ${width} ${selected ? "bg-[#bbd6fb]" : ""}`}>{children}</Fit>
    </div>
  );
}

const card = "rounded-lg bg-white p-8 shadow-[0_2px_6px_rgba(0,0,0,0.12)]";

function Page() {
  return (
    <main className="flex-1 bg-[#f3f4f6] pt-[90px]">
      <div className="mx-auto w-[1344px]">
        <FileRow label="Form A File" labelWidth="w-[169px]" name="Screenshot 20...29 at 07.27.04" nameWidth="w-[441px]" />
        <div className="h-16" />
        <FileRow label="Form B File" labelWidth="w-[168px]" name="Screenshot 20...29 at 07.26.08" nameWidth="w-[446px]" />
        <button className="mt-20 flex h-24 w-full items-center justify-center bg-black">
          <Fit className="w-[177px] text-left text-[32px] leading-[48px] text-white">Submit Files</Fit>
        </button>
        <div className="mt-12 grid grid-cols-2 gap-8">
          <section className={card}>
            <LetterPreview />
            <Caption width="w-[322px]">Uploaded Form A File</Caption>
          </section>
          <section className={card}>
            <FormPreview />
            <Caption width="w-[322px]" selected>Uploaded Form B File</Caption>
          </section>
        </div>
        <section className={`${card} mt-12`}>
          <PdfViewer />
          <Caption width="w-[300px]">AI Generated Result</Caption>
        </section>
      </div>
    </main>
  );
}

/* Red notes drawn over the page. */
function Annotations() {
  return (
    <>
      <Fit className="absolute top-[62px] left-[1649px] w-[919px] text-[70px] leading-[72px] text-[#e84026]">Upload form a in image format</Fit>
      <Fit className="absolute top-[432px] left-[2035px] w-[923px] text-[70px] leading-[72px] text-[#e84026]">Upload form b in image format</Fit>
      <Fit className="absolute top-[1322px] left-[645px] w-[1251px] text-[35px] leading-10 text-[#e84026]">We’ll fill the information from forma to formb in pdf format for you to download</Fit>
      <div className="absolute top-[171px] left-[1813px] h-[81px] w-[733px] rounded-[10px] border-6 border-[#e84026]" />
      <div className="absolute top-[325px] left-[1795px] h-[86px] w-[751px] rounded-[10px] border-6 border-[#e84026]" />
      <svg viewBox="0 0 260 110" className="absolute top-[824px] left-[1674px] h-[110px] w-[260px]" fill="#e84026">
        <path d="M11 1.500 L218.600 67 L219.500 48.700 L257.400 95.500 L198.500 108 L210 92.400 L6.500 12.500 C1 9 4 -0.500 11 1.500Z" />
      </svg>
    </>
  );
}

export default function App() {
  return (
    <div className="relative h-[2570px] w-[3352px] overflow-hidden bg-linear-to-b from-[#d8d4d2] from-50% to-[#2c2213] to-50% font-['Inter','Noto_Sans_CJK_SC',sans-serif]">
      <div className="relative flex h-[2570px] w-[3352px] overflow-hidden rounded-[18px] bg-[linear-gradient(to_bottom,#b4909f_0px,#ae929d_170px,#a3919d_340px,#948d9a_480px,#908a91_700px,#8e8988_900px,#888a84_1150px,#7f8c86_1450px,#788d82_1700px,#6e8c80_2000px,#668a7e_2300px,#62897d_2570px)]">
        <div className="absolute inset-0 bg-[linear-gradient(to_bottom,#93ad8f_0px,#74ab90_1000px,#6aa58f_1500px,#60a08f_2000px,#559a8e_2570px)] [mask-image:linear-gradient(to_right,transparent_390px,black)]" />
        <svg className="absolute inset-0 h-full w-full opacity-20 mix-blend-overlay">
          <filter id="grain">
            <feTurbulence type="fractalNoise" baseFrequency="0.35" numOctaves="2" stitchTiles="stitch" />
            <feColorMatrix type="matrix" values="1.600 0 0 0 -0.3  0 1.600 0 0 -0.3  0 0 1.600 0 -0.3  0 0 0 0 1" />
          </filter>
          <rect width="100%" height="100%" filter="url(#grain)" />
        </svg>
        <div className="absolute inset-x-0 top-0 h-0.5 bg-white/40" />
        <div className="relative flex flex-1">
          <Sidebar />
          <div className="mt-5 mr-5 mb-5 flex flex-1 flex-col overflow-hidden rounded-[14px] bg-[#f3f4f6] shadow-[0_0_14px_rgba(0,0,0,0.35)]">
            <AddressBar />
            <Page />
          </div>
        </div>
      </div>
      <Annotations />
    </div>
  );
}
